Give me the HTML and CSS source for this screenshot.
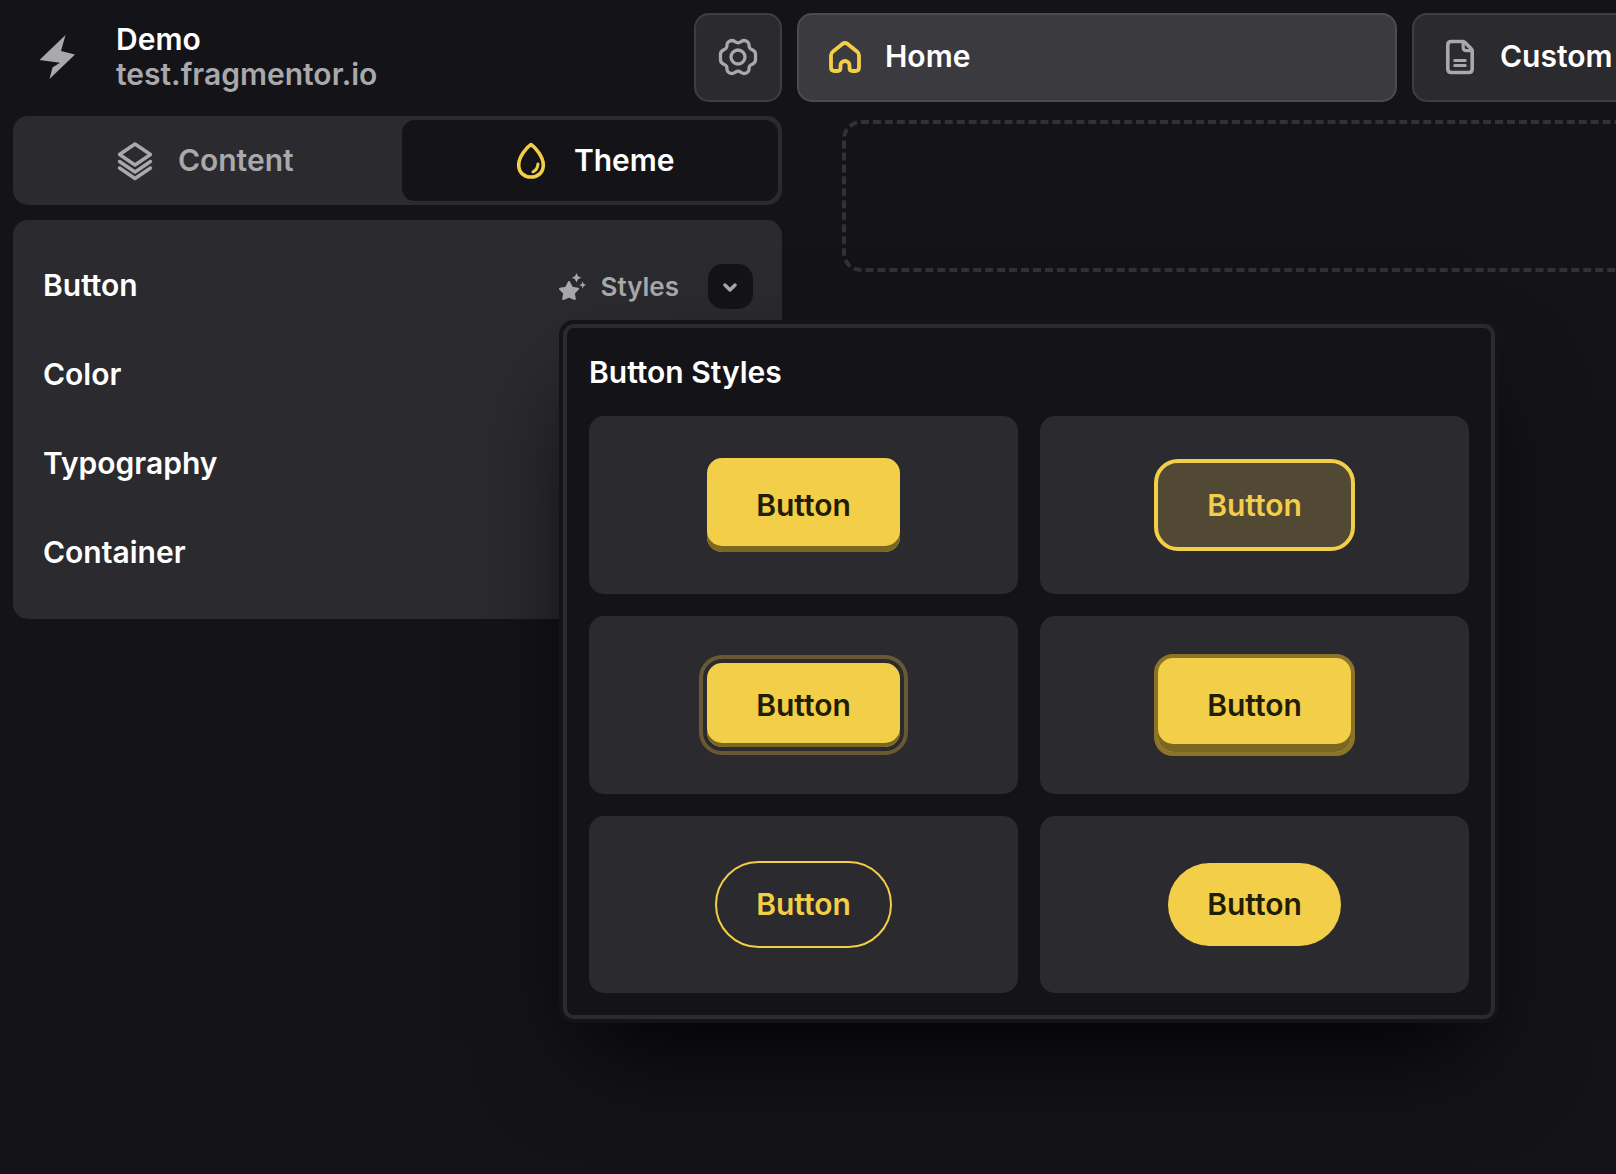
FILE: index.html
```html
<!DOCTYPE html>
<html lang="en">
<head>
<meta charset="utf-8">
<meta name="viewport" content="width=device-width, initial-scale=1">
<title>Demo – Theme editor</title>
<link rel="stylesheet" href="styles.css">
</head>
<body>
<div class="app">
  <aside class="sidebar">
    <header class="site">
      <svg class="site-logo" viewBox="0 0 44 48" aria-hidden="true"><path d="M30.500 2 L26 18 L40 21.500 L14.500 46 L17.500 34.500 L25 29.700 L4.500 27Z" fill="currentColor"/></svg>
      <div class="site-text">
        <h1 class="site-name">Demo</h1>
        <p class="site-domain">test.fragmentor.io</p>
      </div>
      <button class="box settings" type="button" aria-label="Settings">
        <svg class="icon" viewBox="-22 -22 44 44" aria-hidden="true"><g fill="none" stroke="currentColor" stroke-width="3.300" stroke-linejoin="round"><circle r="7"/><path d="M0 -14.200C2.500 -14.200 3.500 -16.500 6 -16.500C8.500 -16.500 11 -14.500 11 -12.500C11 -10.500 10.800 -9.300 12.500 -8.200C14.500 -7 17.500 -6.500 17.500 -3V3C17.500 6.500 14.500 7 12.500 8.200C10.800 9.300 11 10.500 11 12.500C11 14.500 8.500 16.500 6 16.500C3.500 16.500 2.500 14.200 0 14.200C-2.500 14.200 -3.500 16.500 -6 16.500C-8.500 16.500 -11 14.500 -11 12.500C-11 10.500 -10.800 9.300 -12.500 8.200C-14.500 7 -17.500 6.500 -17.500 3V-3C-17.500 -6.500 -14.500 -7 -12.500 -8.200C-10.800 -9.300 -11 -10.500 -11 -12.500C-11 -14.500 -8.500 -16.500 -6 -16.500C-3.500 -16.500 -2.500 -14.200 0 -14.200Z"/></g></svg>
      </button>
    </header>

    <nav class="tabs" aria-label="Editor mode">
      <button class="tab" type="button">
        <svg class="icon" viewBox="-22 -22 44 44" aria-hidden="true"><path d="M0 -17L15.500 -6.500L0 4L-15.500 -6.500ZM-15.500 0.500L0 11L15.500 0.500M-15.500 7L0 17.500L15.500 7" fill="none" stroke="currentColor" stroke-width="3.400" stroke-linejoin="round" stroke-linecap="round"/></svg>
        Content
      </button>
      <button class="tab tab-active" type="button">
        <svg class="icon icon-accent" viewBox="-22 -22 44 44" aria-hidden="true"><g fill="none" stroke="currentColor" stroke-linecap="round" stroke-linejoin="round"><path d="M0 -16.500C-4 -14 -12.300 -4.500 -12.300 4C-12.300 11.500 -7 16 0 16C7 16 12.300 11.500 12.300 4C12.300 -4.500 4 -14 0 -16.500Z" stroke-width="3.600"/><path d="M7 3C6.600 7 5 9.500 2 10.800" stroke-width="3"/></g></svg>
        Theme
      </button>
    </nav>

    <section class="panel" aria-label="Theme settings">
      <div class="row">
        <h2 class="row-title">Button</h2>
        <button class="styles-button" type="button" aria-haspopup="dialog" aria-expanded="true">
          <svg class="icon-small" viewBox="0 0 28 28" aria-hidden="true"><g fill="currentColor"><path d="M10 9L13 14.800L19 15.800L14.800 20.200L15.800 26L10 23.600L4.200 26L5.200 20.200L1 15.800L7 14.800Z" stroke="currentColor" stroke-width="2" stroke-linejoin="round"/><path d="M17.500 0L19 3.200L22.200 4.700L19 6.200L17.500 9.400L16 6.200L12.800 4.700L16 3.200Z"/><path d="M23.700 8.500L24.700 11L27.200 12L24.700 13L23.700 15.500L22.700 13L20.200 12L22.700 11Z"/></g></svg>
          Styles
        </button>
        <button class="expand" type="button" aria-label="Expand Button settings">
          <svg class="chevron" viewBox="0 0 16 16" aria-hidden="true"><path d="M2 6L7 11L12 6" fill="none" stroke="currentColor" stroke-width="3.400" stroke-linecap="round" stroke-linejoin="round"/></svg>
        </button>
      </div>
      <div class="row"><h2 class="row-title">Color</h2></div>
      <div class="row"><h2 class="row-title">Typography</h2></div>
      <div class="row"><h2 class="row-title">Container</h2></div>

      <div class="popover" role="dialog" aria-labelledby="popover-title">
        <h3 class="popover-title" id="popover-title">Button Styles</h3>
        <div class="style-grid">
          <div class="style-card"><button class="sample sample-raised" type="button">Button</button></div>
          <div class="style-card"><button class="sample sample-tinted" type="button">Button</button></div>
          <div class="style-card"><button class="sample sample-ring" type="button">Button</button></div>
          <div class="style-card"><button class="sample sample-deep" type="button">Button</button></div>
          <div class="style-card"><button class="sample sample-outline" type="button">Button</button></div>
          <div class="style-card"><button class="sample sample-pill" type="button">Button</button></div>
        </div>
      </div>
    </section>
  </aside>

  <main class="workspace">
    <nav class="pages" aria-label="Pages">
      <a class="box page page-active" href="#home">
        <svg class="icon icon-accent" viewBox="-22 -22 44 44" aria-hidden="true"><path d="M-2.600 -13.100Q0 -15 2.600 -13.100L12 -5.500Q14 -4 14 -1.500V10.500Q14 14 10.500 14H7.500Q4.500 14 4.500 11V8.500C4.500 2.500 -4.500 2.500 -4.500 8.500V11Q-4.500 14 -7.500 14H-10.500Q-14 14 -14 10.500V-1.500Q-14 -4 -12 -5.500Z" fill="none" stroke="currentColor" stroke-width="3.800" stroke-linejoin="round"/></svg>
        Home
      </a>
      <a class="box page" href="#custom">
        <svg class="icon" viewBox="-22 -22 44 44" aria-hidden="true"><g fill="none" stroke="currentColor" stroke-width="3.600" stroke-linejoin="round" stroke-linecap="round"><path d="M-8.500 -15.500H3Q4 -15.500 5 -14.500L11.200 -8.300Q12.200 -7.300 12.200 -6V12Q12.200 15.500 8.700 15.500H-8.500Q-12.200 15.500 -12.200 12V-12Q-12.200 -15.500 -8.500 -15.500Z"/><path d="M3.200 -15V-9.500Q3.200 -6.300 6.400 -6.300H12M-5.200 3.500H5.200M-5.200 8.500H5.200" stroke-width="3.200"/></g></svg>
        Custom
      </a>
    </nav>
    <div class="canvas">
      <div class="dropzone"></div>
    </div>
  </main>
</div>
</body>
</html>
```
FILE: styles.css
```css
:root {
  --bg: #141318;
  --surface: #2b2a2e;
  --surface-active: #3b3a3e;
  --border: #3e3d41;
  --text: #ffffff;
  --muted: #a9a9ab;
  --accent: #f3ce49;
  --accent-shade: #7a6722;
  --on-accent: #221d05;
  --radius: 15px;
}

* {
  box-sizing: border-box;
}

body {
  margin: 0;
  min-height: 100vh;
  overflow: hidden;
  background: var(--bg);
  color: var(--text);
  font: 600 30px/35px Inter, sans-serif;
}

h1, h2, h3, p {
  margin: 0;
  font-size: inherit;
  font-weight: inherit;
}

button {
  margin: 0;
  padding: 0;
  border: 0;
  background: none;
  color: inherit;
  font: inherit;
}

.app {
  display: grid;
  grid-template-columns: 769px minmax(0, 1fr);
  gap: 15px;
  min-height: 100vh;
  padding: 13px 0 0 13px;
}

.icon {
  flex: none;
  width: 44px;
  height: 44px;
  color: var(--muted);
}

.icon-accent {
  color: var(--accent);
}

.box {
  height: 89px;
  padding-bottom: 2px;
  border: 2px solid var(--border);
  border-radius: var(--radius);
  background: var(--surface);
}

/* Sidebar */

.sidebar {
  display: flex;
  flex-direction: column;
  position: relative;
  z-index: 1;
}

.site {
  display: flex;
  align-items: center;
  margin-bottom: 14px;
  padding-left: 22px;
}

.site-logo {
  width: 44px;
  height: 48px;
  margin-bottom: 2px;
  color: var(--muted);
}

.site-text {
  flex: 1;
  padding: 0 0 2px 37px;
}

.site-domain {
  color: var(--muted);
}

.settings {
  display: flex;
  align-items: center;
  justify-content: center;
  width: 88px;
}

.tabs {
  display: grid;
  grid-template-columns: 1fr 1fr;
  gap: 8px;
  height: 89px;
  margin-bottom: 15px;
  padding: 4px;
  border-radius: var(--radius);
  background: var(--surface);
}

.tab {
  display: flex;
  align-items: center;
  justify-content: center;
  gap: 21px;
  padding-right: 4px;
  border-radius: 13px;
  color: var(--muted);
}

.tab-active {
  padding: 0 0 0 4px;
  background: var(--bg);
  color: var(--text);
}

.panel {
  position: relative;
  padding: 22px 29px 21px 30px;
  border-radius: var(--radius);
  background: var(--surface);
}

.row {
  display: flex;
  align-items: center;
  height: 89px;
}

.row-title {
  flex: 1;
  padding-bottom: 2px;
}

.styles-button {
  display: flex;
  align-items: center;
  gap: 14px;
  color: var(--muted);
  font-size: 26px;
}

.icon-small {
  width: 28px;
  height: 28px;
}

.expand {
  display: flex;
  align-items: center;
  justify-content: center;
  width: 45px;
  height: 45px;
  margin-left: 29px;
  border-radius: var(--radius);
  background: var(--bg);
  color: var(--muted);
}

.chevron {
  width: 16px;
  height: 16px;
}

/* Button style picker, floats over the panel and the canvas */

.popover {
  position: absolute;
  top: 104px;
  left: 550px;
  width: 932px;
  padding: 22px;
  border: 4px solid var(--surface);
  border-radius: 11px;
  background: var(--bg);
  box-shadow: 0 0 0 4px var(--bg), 0 50px 100px -24px #000;
}

.popover-title {
  padding: 5px 0 26px;
}

.style-grid {
  display: grid;
  grid-template-columns: 1fr 1fr;
  grid-template-rows: 178px 178px 177px;
  gap: 22px;
}

.style-card {
  display: flex;
  align-items: center;
  justify-content: center;
  border-radius: var(--radius);
  background: var(--surface);
}

.sample {
  padding: 0 49px;
  border-radius: var(--radius);
  background: var(--accent);
  color: var(--on-accent);
}

.sample-raised {
  height: 94px;
  box-shadow: inset 0 -6px var(--accent-shade);
}

.sample-tinted {
  height: 92px;
  border: 4px solid var(--accent);
  border-radius: 24px;
  background: #524935;
  color: var(--accent);
}

.sample-ring {
  height: 84px;
  outline: 4px solid #685932;
  outline-offset: 4px;
  box-shadow: inset 0 -4px var(--accent-shade);
}

.sample-deep {
  height: 102px;
  border: 4px solid #8b7427;
  border-radius: 19px;
  box-shadow: inset 0 -8px var(--accent-shade);
}

.sample-outline {
  height: 87px;
  padding: 0 39px;
  border: 2px solid var(--accent);
  border-radius: 44px;
  background: none;
  color: var(--accent);
}

.sample-pill {
  height: 83px;
  padding: 0 39px;
  border-radius: 42px;
}

/* Workspace */

.workspace {
  overflow: hidden;
}

.pages {
  display: flex;
  gap: 15px;
}

.page {
  display: flex;
  flex: none;
  align-items: center;
  gap: 18px;
  width: 600px;
  padding: 0 24px 2px;
  color: var(--text);
  text-decoration: none;
}

.page-active {
  border-color: #4c4b4f;
  background: var(--surface-active);
}

.canvas {
  padding: 18px 0 0 45px;
}

.dropzone {
  height: 152px;
  margin-right: -60px;
  border: 4px dashed #323136;
  border-radius: 19px;
}
```
